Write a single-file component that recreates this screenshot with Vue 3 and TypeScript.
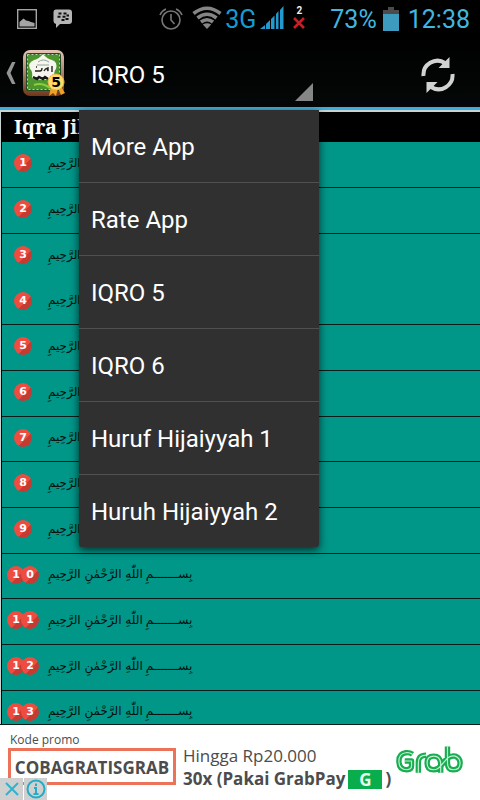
<script setup lang="ts">
import { ref } from 'vue'

interface MenuEntry {
  id: number
  label: string
}

const entries: MenuEntry[] = [
  'More App',
  'Rate App',
  'IQRO 5',
  'IQRO 6',
  'Huruf Hijaiyyah 1',
  'Huruh Hijaiyyah 2',
].map((label, id) => ({ id, label }))

const selected = ref('IQRO 5')
const open = ref(true)

function choose(entry: MenuEntry): void {
  selected.value = entry.label
  open.value = false
}

const pages: string[][] = Array.from({ length: 13 }, (_, i) => String(i + 1).split(''))
</script>

<template>
  <div class="screen">
    <header class="status">
      <svg class="ico-picture" width="20" height="20" viewBox="0 0 20 20">
        <rect x="0.7" y="0.7" width="18.6" height="18.6" fill="none" stroke="#a4a4a4" stroke-width="1.4" />
        <path d="M2.5 17.500V13L6.500 9.500L9 11.500L11.500 12L14 13L17.500 14V17.500Z" fill="#a4a4a4" />
      </svg>
      <svg class="ico-chat" width="20" height="20" viewBox="0 0 20 20">
        <path d="M3 0.500H16Q19 0.500 19 3.500V12Q19 15 16 15H7L3 19V15Q0.500 14.500 0.500 12V3.500Q0.500 0.500 3 0.500Z" fill="#b5b5b5" />
        <path d="M5.500 4.500H8.500M10.500 4.500H13.500M4.500 7.800H7.500M9.500 7.800H12.500M13.500 6.500H16M8.500 11H11.500M12.500 10H15.500" stroke="#111" stroke-width="1.900" />
      </svg>
      <span class="gap"></span>
      <svg class="ico-alarm" width="24" height="24" viewBox="0 0 24 24" fill="none" stroke="#777" stroke-width="1.600">
        <circle cx="12" cy="13" r="9" />
        <path d="M12 7V13L15.500 17M1 8Q3 3.500 7 2M23 8Q21 3.500 17 2" />
      </svg>
      <svg class="ico-wifi" width="30" height="24" viewBox="0 0 30 24" fill="none" stroke="#858585" stroke-width="3.600">
        <path d="M1.500 7.500Q15 -3 28.500 7.500" />
        <path d="M5.500 12Q15 4.500 24.500 12" />
        <path d="M9 16Q15 11.500 21 16" />
        <path d="M15 23L10.800 18.500Q15 15.800 19.200 18.500Z" fill="#858585" stroke="none" />
      </svg>
      <span class="net">3G</span>
      <svg class="ico-signal" width="24" height="24" viewBox="0 0 24 24" fill="#2499d0">
        <path d="M0 23L5 19V23ZM6 18L10 14V23H6ZM11 13L14.500 9.500V23H11ZM16 8L18.500 5V23H16ZM20 4L23.500 0V23H20Z" />
      </svg>
      <span class="sim">
        <span>2</span>
        <svg width="12" height="12" viewBox="0 0 12 12"><path d="M1 1L11 11M11 1L1 11" stroke="#c81e24" stroke-width="2.600" /></svg>
      </span>
      <span class="percent">73%</span>
      <svg class="ico-battery" width="16" height="24" viewBox="0 0 16 24">
        <path d="M0 3H5V0H11V3H16V8H0Z" fill="#4b4b4b" />
        <rect y="7" width="16" height="17" fill="#3e9bc0" />
      </svg>
      <span class="clock">12:38</span>
    </header>

    <nav class="bar">
      <a class="home" href="#" aria-label="Back">
        <svg width="10" height="22" viewBox="0 0 10 22"><path d="M6 0H9.500L4.500 11L9.500 22H6L0.500 11Z" fill="#939393" /></svg>
        <svg class="app-icon" width="44" height="48" viewBox="0 0 44 48">
          <defs>
            <linearGradient id="frame" x1="0" y1="0" x2="0" y2="1">
              <stop offset="0" stop-color="#e5c5b4" />
              <stop offset="0.500" stop-color="#a98169" />
              <stop offset="1" stop-color="#703719" />
            </linearGradient>
          </defs>
          <rect x="1" y="1" width="41" height="46" rx="7" fill="url(#frame)" />
          <rect x="4" y="4" width="35" height="38" rx="2" fill="#234b28" />
          <rect x="5.500" y="5.500" width="32" height="35" fill="#4d962d" stroke="#b7d7b4" stroke-dasharray="2 2" />
          <path d="M8 20Q5 14 12 11Q17 10 21 5Q25 10 30 11Q36 13 34 20Q32 21 32 29Q20 33 10 29Q11 22 8 20Z" fill="#f6f5ee" />
          <path d="M16 13Q21 9 27 13M15 16H27" fill="none" stroke="#8ca695" />
          <path d="M13 22H18Q20 22 20 19M22 22Q25 17 26 22V18M30 17V23M14 18H15" fill="none" stroke="#222" stroke-width="1.400" />
          <path d="M11 28L15 30L17 28L21 30L23 28L26 30" fill="none" stroke="#171717" stroke-width="2.500" />
          <path d="M12 36Q20 33 28 39" fill="none" stroke="#8bcd3c" stroke-width="2" />
          <path d="M29 38L27 47L31 44L34 47L36 39L39 46L43 44L38 36Z" fill="#efa126" />
          <circle cx="34" cy="33" r="8" fill="#ffda68" stroke="#e8a43a" stroke-dasharray="2 1" />
          <text x="34" y="38" text-anchor="middle" class="seal">5</text>
        </svg>
      </a>
      <div class="spinner">
        <button class="spinner-button" type="button" :aria-expanded="open" @click="open = !open">
          <span>{{ selected }}</span>
          <svg width="18" height="18" viewBox="0 0 18 18"><path d="M18 0V18H0Z" fill="#868686" /></svg>
        </button>
        <ul v-if="open" class="menu">
          <li v-for="entry in entries" :key="entry.id">
            <button type="button" @click="choose(entry)">{{ entry.label }}</button>
          </li>
        </ul>
      </div>
      <button class="refresh" type="button" aria-label="Refresh">
        <svg width="34" height="36" viewBox="0 0 34 36">
          <path d="M2.500 19A14 14 0 0 1 24 6M31.500 17A14 14 0 0 1 10 30" fill="none" stroke="#d2d2d2" stroke-width="4" />
          <path d="M28.500 0V11H17.500ZM5.500 36V25H16.500Z" fill="#d2d2d2" />
        </svg>
      </button>
    </nav>

    <main class="content">
      <table class="pages">
        <thead>
          <tr><th colspan="2">Iqra Jilid 5</th></tr>
        </thead>
        <tbody>
          <tr v-for="(digits, i) in pages" :key="i" :class="{ joined: i === 2 }">
            <td class="number">
              <span class="badges">
                <span v-for="(digit, d) in digits" :key="d" class="badge">{{ digit }}</span>
              </span>
            </td>
            <td class="verse">
              <a href="#" class="basmala" lang="ar"><span class="names" dir="rtl">اللّٰهِ الرَّحْمٰنِ الرَّحِيمِ</span><span class="opening" dir="rtl">بِســـــــمِ</span></a>
            </td>
          </tr>
        </tbody>
      </table>
    </main>

    <aside class="ad">
      <a class="promo" href="#">
        <span class="caption">Kode promo</span>
        <span class="code">COBAGRATISGRAB</span>
      </a>
      <a class="offer" href="#">
        <span class="upto">Hingga Rp20.000</span>
        <span class="deal">30x (Pakai GrabPay <span class="pay">G</span> )</span>
      </a>
      <a class="brand" href="#" aria-label="Grab">
        <svg width="68" height="30" viewBox="0 0 70 30" fill="none" stroke-linejoin="round">
          <g stroke="#17ad50" stroke-width="5.600">
            <path d="M17 8Q14 6 10 6.500Q3 7.500 3 15Q3 24 11 24Q16 24 16 20V15H9" />
            <path d="M23 27V17Q23 9 31 9" />
            <path d="M46 27V17Q45 10 39 10Q32 10 32 17Q32 24 39 24Q43 24 46 20L53 12Q57 9 61 10Q66 12 66 17Q66 24 59 24Q53 24 53 17V0" />
          </g>
          <g stroke="#c5f0d3" stroke-width="1.200">
            <path d="M17 8Q14 6 10 6.500Q3 7.500 3 15Q3 24 11 24Q16 24 16 20V15H9" />
            <path d="M23 27V17Q23 9 31 9" />
            <path d="M46 27V17Q45 10 39 10Q32 10 32 17Q32 24 39 24Q43 24 46 20L53 12Q57 9 61 10Q66 12 66 17Q66 24 59 24Q53 24 53 17V0" />
          </g>
        </svg>
      </a>
      <div class="ad-controls">
        <button type="button" aria-label="Close ad">
          <svg width="16" height="16" viewBox="0 0 16 16"><path d="M2 2L14 14M14 2L2 14" stroke="#2eb3cb" stroke-width="2" /></svg>
        </button>
        <button type="button" aria-label="Ad information">
          <svg width="20" height="20" viewBox="0 0 20 20" fill="none" stroke="#21adc6" stroke-width="2">
            <circle cx="10" cy="10" r="8.500" />
            <path d="M10 4.500V7M8 9H10V15M7.500 15H12.500" />
          </svg>
        </button>
      </div>
    </aside>
  </div>
</template>

<style>
body {
  margin: 0;
  background: #fff;
}
</style>

<style scoped>
.screen {
  display: flex;
  flex-direction: column;
  height: 100vh;
  overflow: hidden;
  font-family: Roboto, "Liberation Sans", sans-serif;
}
button {
  border: 0;
  padding: 0;
  background: none;
  font: inherit;
  color: inherit;
}
a {
  color: inherit;
  text-decoration: none;
}
svg {
  display: block;
  flex: none;
}
.status {
  display: flex;
  align-items: center;
  flex: none;
  height: 38px;
  padding: 0 10px 0 17px;
  background: #000;
  color: #41b7e0;
  font-size: 25px;
}
.ico-chat { margin-left: 16px; }
.gap { flex: 1; }
.ico-wifi { margin: 0 3px 2px 9px; }
.net {
  color: #159bd3;
}
.ico-signal { margin: 0 0 2px 4px; }
.sim {
  display: flex;
  flex-direction: column;
  align-items: center;
  gap: 1px;
  width: 30px;
  margin-bottom: 4px;
  color: #eee;
  font-size: 10px;
  font-weight: 700;
  line-height: 11px;
}
.percent { margin-left: 16px; }
.ico-battery { margin: 0 9px 0 6px; }
.bar {
  position: relative;
  z-index: 1;
  display: flex;
  flex: none;
  height: 69px;
  border-bottom: 3px solid #40add8;
  background: linear-gradient(#000, #050808);
  color: #fff;
}
.home {
  display: flex;
  align-items: center;
  gap: 6px;
  width: 73px;
  padding-left: 6px;
}
.seal {
  font: 900 14px "DejaVu Sans", sans-serif;
}
.spinner {
  position: relative;
  width: 50%;
}
.spinner-button {
  display: flex;
  justify-content: space-between;
  align-items: center;
  width: 100%;
  height: 100%;
  padding: 4px 6px 0 12px;
  font-size: 24px;
}
.spinner-button svg {
  align-self: flex-end;
  margin-bottom: 6px;
}
.menu {
  position: absolute;
  top: 72px;
  left: 0;
  width: 100%;
  margin: 0;
  padding: 0;
  list-style: none;
  background: #303030;
  border-radius: 0 0 3px 3px;
  box-shadow: 0 3px 8px rgba(0, 0, 0, 0.7);
}
.menu li + li {
  border-top: 1px solid #505050;
}
.menu button {
  display: block;
  width: 100%;
  height: 72px;
  padding: 2px 0 0 12px;
  text-align: left;
  font-size: 24px;
}
.refresh {
  margin: 4px 25px 0 auto;
}
.content {
  flex: 1;
  min-height: 0;
  overflow: hidden;
  padding: 2px 0 0 1px;
  background: #c8d4d4;
  border-bottom: 1px solid #001c19;
}
.pages {
  width: 100%;
  border-spacing: 0;
  border-left: 1px solid #000;
  background: #009688;
}
.pages th {
  height: 30px;
  padding: 0 12px;
  background: #000;
  color: #fff;
  font: bold 20px/30px "Noto Serif", "DejaVu Serif Condensed", "DejaVu Serif", serif;
  text-align: left;
}
.pages td {
  box-sizing: border-box;
  height: 46px;
  padding: 0;
  border-bottom: 1px solid #001c19;
}
.pages tr:nth-child(3n + 4) td {
  height: 45px;
}
.pages .joined td {
  border-bottom-color: #009688;
}
.pages .number {
  width: 42px;
  padding-bottom: 3px;
}
.badges {
  display: flex;
  justify-content: center;
}
.badge {
  width: 18px;
  height: 18px;
  border-radius: 50%;
  background: linear-gradient(135deg, #ef4c40 60%, #c53a33 60%);
  color: #fff;
  font: bold 11px/18px "DejaVu Sans", sans-serif;
  text-align: center;
}
.badge + .badge {
  margin-left: -4px;
}
.basmala {
  display: inline-flex;
  align-items: center;
  gap: 3px;
  margin-left: 4px;
  padding-bottom: 4px;
  color: #000f0d;
  font-family: "DejaVu Sans", sans-serif;
  line-height: 24px;
  white-space: nowrap;
}
.names {
  font-size: 12px;
}
.opening {
  font-size: 12px;
}
.ad {
  position: relative;
  display: flex;
  flex: none;
  height: 75px;
  background: #fff;
  color: #4c4c4c;
  font-family: "Open Sans", "Noto Sans", sans-serif;
}
.promo {
  display: flex;
  flex-direction: column;
  width: 168px;
  padding: 7px 0 0 8px;
}
.caption {
  padding-left: 2px;
  font-size: 12px;
  line-height: 16px;
}
.code {
  box-sizing: border-box;
  height: 37px;
  border: 3px solid #ec735a;
  font-size: 17px;
  font-weight: 700;
  line-height: 33px;
  text-align: center;
}
.offer {
  display: flex;
  flex-direction: column;
  padding: 19px 0 0 7px;
  white-space: nowrap;
}
.upto {
  font-size: 17px;
  line-height: 24px;
}
.deal {
  display: flex;
  align-items: center;
  gap: 3px;
  font-size: 17px;
  font-weight: 700;
  line-height: 22px;
}
.pay {
  width: 34px;
  background: #0aad4c;
  color: #e5ffee;
  line-height: 19px;
  text-align: center;
}
.brand {
  margin: 21px 16px 0 auto;
}
.ad-controls {
  position: absolute;
  left: 0;
  bottom: 0;
  display: flex;
  gap: 1px;
}
.ad-controls button {
  display: grid;
  place-items: center;
  width: 23px;
  height: 22px;
  background: #d0d0d0;
}
</style>
